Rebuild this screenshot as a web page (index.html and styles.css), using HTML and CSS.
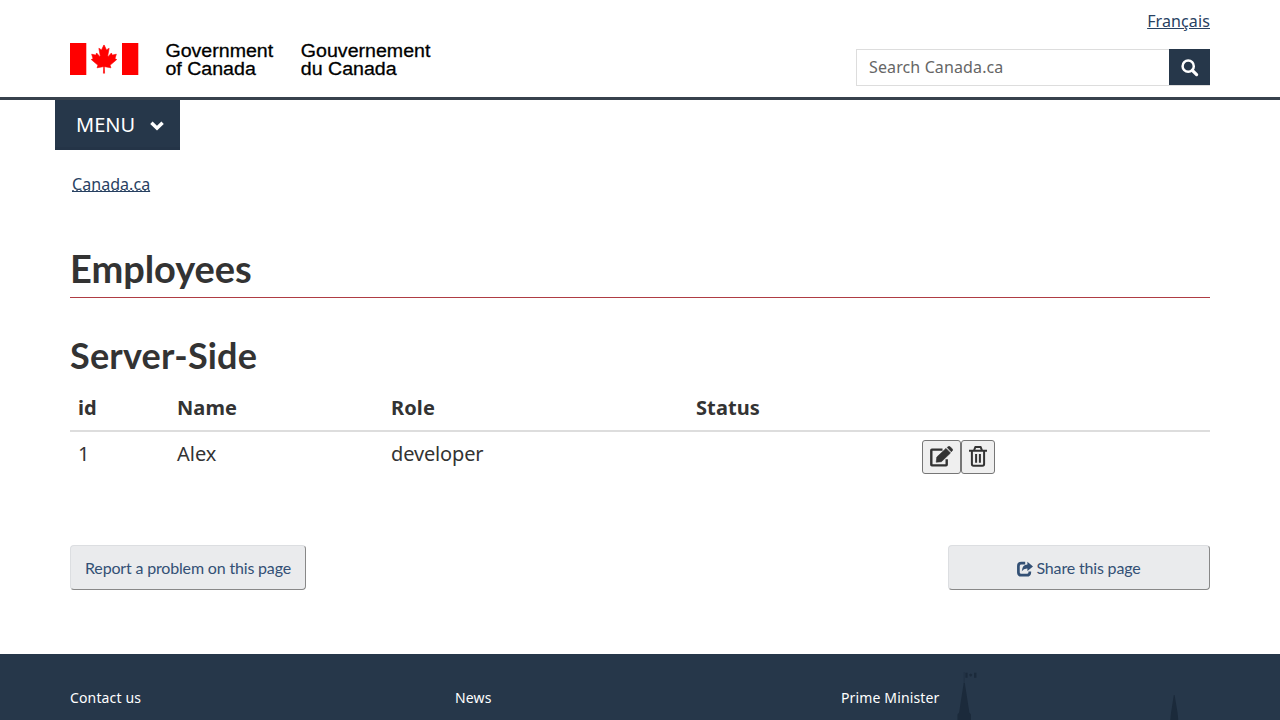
FILE: index.html
```html
<!DOCTYPE html>
<html lang="en">
<head>
<meta charset="utf-8">
<title>Employees - Canada.ca</title>
<link rel="stylesheet" href="styles.css">
</head>
<body>
<header class="site-header">
  <div class="container header-row">
    <svg class="brand" width="370" height="40" viewBox="0 0 370 40" role="img" aria-label="Government of Canada">
      <path fill="#f00" d="M0 0h16.3v32H0zM52 0h16.3v32H52z"/>
      <svg x="20.2" y="1.8" width="27.6" height="28.8" viewBox="-2015 -2000 4030 4030" preserveAspectRatio="none">
        <path fill="#f00" stroke="#f00" stroke-width="90" d="m-90 2030 45-863a95 95 0 0 0-111-98l-859 151 116-320a65 65 0 0 0-20-73l-941-762 212-99a65 65 0 0 0 34-79l-186-572 542 115a65 65 0 0 0 73-38l105-247 423 454a65 65 0 0 0 111-57l-204-1052 327 189a65 65 0 0 0 91-27l332-652 332 652a65 65 0 0 0 91 27l327-189-204 1052a65 65 0 0 0 111 57l423-454 105 247a65 65 0 0 0 73 38l542-115-186 572a65 65 0 0 0 34 79l212 99-941 762a65 65 0 0 0-20 73l116 320-859-151a95 95 0 0 0-111 98l45 863z"/>
      </svg>
      <g class="wordmark">
        <text x="95.4" y="13.9" textLength="107.8" lengthAdjust="spacingAndGlyphs">Government</text>
        <text x="95.4" y="32.3" textLength="90.4" lengthAdjust="spacingAndGlyphs">of Canada</text>
        <text x="230.8" y="13.9" textLength="129.6" lengthAdjust="spacingAndGlyphs">Gouvernement</text>
        <text x="230.8" y="32.3" textLength="95.8" lengthAdjust="spacingAndGlyphs">du Canada</text>
      </g>
    </svg>
    <div class="tools">
      <a class="lang" href="#">Français</a>
      <form class="search">
        <input type="search" placeholder="Search Canada.ca" aria-label="Search">
        <button type="button" aria-label="Search"><svg width="18" height="18" viewBox="0 0 18 18" fill="none" stroke="#fff"><circle cx="7.2" cy="7.2" r="5.6" stroke-width="2.5"/><path d="M11.3 11.3l4.3 4.3" stroke-width="3.2" stroke-linecap="round"/></svg></button>
      </form>
    </div>
  </div>
</header>
<nav class="container menu-bar">
  <button class="menu"><span>MENU</span><svg width="14" height="10" viewBox="0 0 14 10"><path fill="#fff" d="M2.6.5 7 4.7 11.4.5 13.8 2.9 7 9.6.2 2.9z"/></svg></button>
</nav>
<div class="container crumbs"><a href="#"><abbr>Canada.ca</abbr></a></div>
<main class="container">
  <h1>Employees</h1>
  <h2>Server-Side</h2>
  <table>
    <colgroup><col class="c-id"><col class="c-name"><col class="c-role"><col class="c-status"><col></colgroup>
    <thead><tr><th>id</th><th>Name</th><th>Role</th><th>Status</th><th></th></tr></thead>
    <tbody><tr><td>1</td><td>Alex</td><td class="role">developer</td><td></td><td><div class="actions">
      <button class="edit" aria-label="Edit"><svg width="23" height="21" viewBox="0 0 23 21"><path fill="none" stroke="#333" stroke-width="2.4" stroke-linejoin="round" d="M12.5 3.6H1.9q-.6 0-.6.6v14.6q0 .6.6.6h14.2q.6 0 .6-.6v-5.6"/><path fill="#333" stroke="#333" stroke-width=".6" stroke-linejoin="round" d="M16 2.4 20.5 7 11.4 15.7 6.2 16.2 6.8 11zM17.2 1.4 18.4.6q.9-.6 1.8.2l2.1 2.2q.8.8 0 1.7l-1 1.1z"/></svg></button>
      <button class="delete" aria-label="Delete"><svg width="18" height="21" viewBox="0 0 18 21" fill="none" stroke="#333" stroke-width="2"><path d="M0 4.8h18M5 4.5 6.2 1.3q.2-.4.7-.4h4.2q.5 0 .7.4L13 4.5M2.9 5v13.1q0 1.7 1.6 1.7h9q1.6 0 1.6-1.7V5M7.1 8v8.8M10.9 8v8.8"/></svg></button>
    </div></td></tr></tbody>
  </table>
  <div class="page-details">
    <a class="btn report" href="#">Report a problem on this page</a>
    <a class="btn share" href="#"><svg width="16" height="16" viewBox="0 0 16 16"><path fill="none" stroke="#335075" stroke-width="2.7" d="M8.2 2.2H4.4Q1.4 2.2 1.4 5v6.4q0 2.8 3 2.8h5.4q3 0 3-2.8v-.8"/><path fill="#335075" d="M10.4.8 16 5.4l-5.6 4.7V7.4Q6.7 7.2 4.8 10.2 5.1 3.9 10.4 3.5z"/></svg>Share this page</a>
  </div>
</main>
<footer>
  <svg class="skyline" width="330" height="66" viewBox="950 654 330 66" fill="#1b2a3b" aria-hidden="true">
    <path d="M963.7 683h1.1l4.6 29.5 1.6 2V720h-13.5v-5.5l1.6-2zM1173.8 695h.8l3 18 .7 7h-8l.7-7z"/>
    <path opacity=".65" d="M963.8 672h.7v12h-.7z"/><path d="M965.4 672.8h2.2v5h-2.2zM974 672.8h2.4v5H974zM969 674.8l1.7-1.3 1.7 1.3-1.2 1.8h-1z"/>
  </svg>
  <ul class="container footer-links"><li><a href="#">Contact us</a></li><li><a href="#">News</a></li><li><a href="#">Prime Minister</a></li></ul>
</footer>
</body>
</html>
```
FILE: styles.css
```css
* { box-sizing: border-box; }
html { overflow: hidden; }
body { margin: 0; height: 720px; overflow: hidden; background: #fff; color: #333; font: 20px/33px "Noto Sans", sans-serif; }
.container { width: 1140px; margin: 0 auto; }
.site-header { height: 100px; border-bottom: 3px solid #38414d; }
.header-row { display: flex; justify-content: space-between; }
.brand { display: block; margin-top: 43px; overflow: visible; }
.wordmark { font: 18.8px "Liberation Sans", sans-serif; fill: #000; stroke: #000; stroke-width: .3px; }
.tools { display: flex; flex-direction: column; align-items: flex-end; padding-top: 9px; }
.lang { font-size: 16px; line-height: 24px; letter-spacing: .12px; color: #284162; }
.search { display: flex; width: 354px; height: 37px; margin-top: 16px; border: 1px solid #ddd; border-width: 1px 0 1px 1px; }
.search input { flex: 1; min-width: 0; border: 0; padding: 0 12px 2px; background: #fff; font: 16px "Noto Sans", sans-serif; letter-spacing: .12px; }
.search input::placeholder { color: #666; opacity: 1; }
.search button { display: flex; justify-content: center; align-items: center; width: 41px; height: 36px; margin-top: -1px; padding: 1px 0 0; border: 0; background: #26374a; }
.menu { display: flex; align-items: center; width: 125px; height: 50px; margin-left: -15px; padding: 2px 0 0 21px; gap: 15px; border: 0; border-bottom: 3px solid #243447; background: #26374a; color: #fff; font: 20px "Noto Sans", sans-serif; }
.menu svg { margin-top: 3px; }
.crumbs { padding: 22px 2px 0; font-size: 16px; line-height: 24px; letter-spacing: .05px; }
.crumbs a { color: #284162; }
.crumbs abbr { border-bottom: 0; text-decoration: underline dotted; }
h1, h2 { font-family: Lato, sans-serif; font-weight: 700; color: #333; }
h1 { margin: 50px 0 0; padding-bottom: 6px; border-bottom: 1px solid #af3c43; font-size: 38px; line-height: 45px; letter-spacing: -.05px; }
h2 { margin: 37px 0 0; font-size: 36px; line-height: 40px; letter-spacing: .2px; }
table { width: 100%; margin-top: 11px; table-layout: fixed; border-collapse: collapse; }
.c-id { width: 99px; }
.c-name { width: 214px; }
.c-role { width: 305px; }
.c-status { width: 226px; }
th, td { padding: 8px; text-align: left; vertical-align: top; line-height: 28px; }
th { border-bottom: 2px solid #ddd; letter-spacing: .1px; }
.role { letter-spacing: -.15px; }
.actions { display: flex; }
.actions button { display: flex; align-items: flex-start; justify-content: center; height: 34px; padding: 5px 0 0; border: 1px solid #767676; border-radius: 3px; background: #efefef; }
.edit { width: 39px; }
.delete { width: 34px; }
.page-details { display: flex; justify-content: space-between; margin-top: 63px; }
.btn { display: flex; align-items: center; justify-content: center; height: 45px; padding-bottom: 1px; border: 1px solid #dcdee1; border-right-color: #888; border-bottom-color: #888; border-radius: 4px; background: #eaebed; color: #335075; font: 16px Lato, sans-serif; letter-spacing: -.17px; text-decoration: none; }
.report { width: 236px; }
.share { width: 262px; gap: 3px; }
.share svg { margin-top: 3px; }
footer { position: relative; height: 66px; margin-top: 64px; background: #26374a; }
.skyline { position: absolute; right: 0; top: 0; }
.footer-links { position: relative; display: grid; grid-template-columns: 385px 386px 1fr; padding: 32px 0 0; list-style: none; font-size: 14px; line-height: 24px; letter-spacing: .14px; }
.footer-links a { color: #fff; text-decoration: none; }
```
